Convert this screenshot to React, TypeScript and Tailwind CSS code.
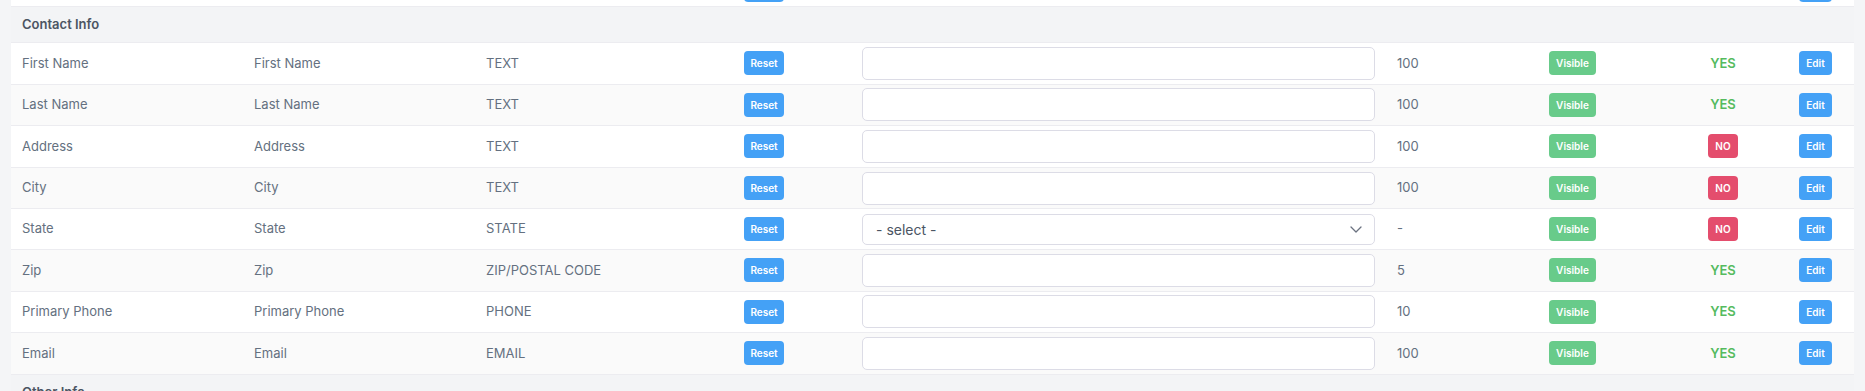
import React from 'react';

type Field = {
  name: string;
  label: string;
  type: string;
  max: string;
  required: boolean;
  select?: boolean;
};

const fields: Field[] = [
  { name: 'First Name', label: 'First Name', type: 'TEXT', max: '100', required: true },
  { name: 'Last Name', label: 'Last Name', type: 'TEXT', max: '100', required: true },
  { name: 'Address', label: 'Address', type: 'TEXT', max: '100', required: false },
  { name: 'City', label: 'City', type: 'TEXT', max: '100', required: false },
  { name: 'State', label: 'State', type: 'STATE', max: '-', required: false, select: true },
  { name: 'Zip', label: 'Zip', type: 'ZIP/POSTAL CODE', max: '5', required: true },
  { name: 'Primary Phone', label: 'Primary Phone', type: 'PHONE', max: '10', required: true },
  { name: 'Email', label: 'Email', type: 'EMAIL', max: '100', required: true },
];

const cols = 'grid grid-cols-[232px_232px_258px_118px_535px_152px_120px_130px_1fr] items-center';
const cell = 'px-[11px]';
const btn =
  'h-[24px] rounded-[4px] text-[10px] font-semibold text-white flex items-center justify-center leading-none';

function SectionHeader({ title }: { title: string }) {
  return (
    <div className="h-[36px] bg-[#f3f4f6] border-b border-[#ececf0] flex items-center px-[11px]">
      <span className="text-[13px] font-semibold text-[#4b5563]">{title}</span>
    </div>
  );
}

function FieldRow({ field, striped }: { field: Field; striped: boolean }) {
  return (
    <div
      className={`${cols} ${field.select ? 'h-[40.6px]' : 'h-[41.6px]'} border-b border-[#ececf0] ${
        striped ? 'bg-[#fafafa]' : 'bg-white'
      } text-[13px] text-[#647080]`}
    >
      <div className={cell}>{field.name}</div>
      <div className={cell}>{field.label}</div>
      <div className={cell}>{field.type}</div>
      <div className={cell}>
        <button className={`${btn} w-[40px] bg-[#44a1f6]`}>Reset</button>
      </div>
      <div className={cell}>
        {field.select ? (
          <div className="relative">
            <select className="appearance-none w-full h-[31px] rounded-[5px] border border-[#dcdce6] bg-white pl-[13px] text-[14px] text-[#4b5563] outline-none">
              <option>- select -</option>
            </select>
            <svg
              className="absolute right-[13px] top-[12px] pointer-events-none"
              width="12"
              height="7"
              viewBox="0 0 12 7"
              fill="none"
              stroke="#6b7280"
              strokeWidth="1.3"
              strokeLinecap="round"
              strokeLinejoin="round"
            >
              <path d="M1 1l5 5 5-5" />
            </svg>
          </div>
        ) : (
          <input
            type="text"
            className="block w-full h-[33px] rounded-[5px] border border-[#dcdce6] bg-white outline-none"
          />
        )}
      </div>
      <div className={cell}>{field.max}</div>
      <div className={cell}>
        <span className={`${btn} w-[47px] bg-[#68cb8a]`}>Visible</span>
      </div>
      <div className="flex justify-center">
        {field.required ? (
          <span className="text-[13px] font-semibold text-[#55bb5e]">YES</span>
        ) : (
          <span className={`${btn} w-[30px] bg-[#e44d6d]`}>NO</span>
        )}
      </div>
      <div className={cell}>
        <button className={`${btn} w-[33px] bg-[#44a1f6]`}>Edit</button>
      </div>
    </div>
  );
}

export default function App() {
  return (
    <div
      className="min-h-screen bg-[#f4f5f7] px-[11px] overflow-hidden"
      style={{ fontFamily: 'Inter, "Noto Sans", sans-serif' }}
    >
      <div className="bg-white -mt-[26px]">
        {/* tail of the previous section */}
        <div className={`${cols} h-[33px] border-b border-[#ececf0]`}>
          <div className={cell} />
          <div className={cell} />
          <div className={cell} />
          <div className={cell}>
            <button className={`${btn} w-[40px] bg-[#44a1f6]`}>Reset</button>
          </div>
          <div className={cell} />
          <div className={cell} />
          <div className={cell} />
          <div />
          <div className={cell}>
            <button className={`${btn} w-[33px] bg-[#44a1f6]`}>Edit</button>
          </div>
        </div>

        <SectionHeader title="Contact Info" />
        {fields.map((f, i) => (
          <FieldRow key={f.name} field={f} striped={i % 2 === 1} />
        ))}
        <SectionHeader title="Other Info" />
        <div className="h-[42px]" />
      </div>
    </div>
  );
}
